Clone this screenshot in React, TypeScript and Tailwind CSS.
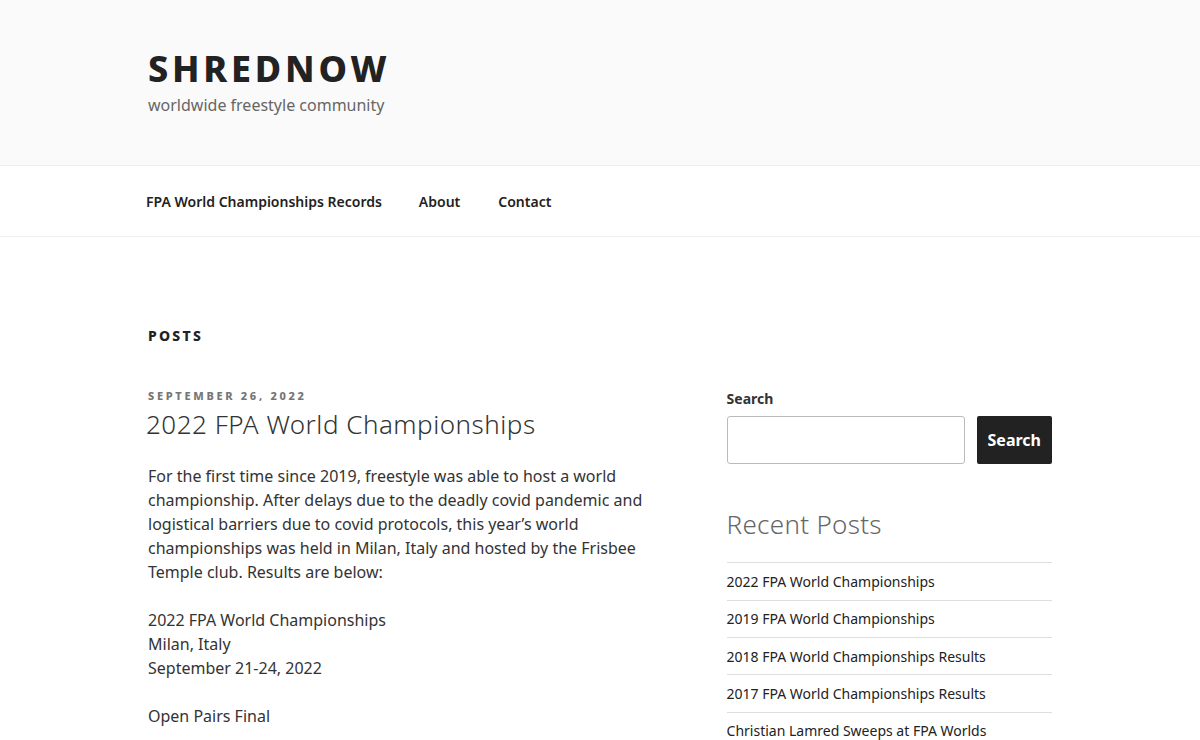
const recent = [
  "2022 FPA World Championships",
  "2019 FPA World Championships",
  "2018 FPA World Championships Results",
  "2017 FPA World Championships Results",
  "Christian Lamred Sweeps at FPA Worlds",
];

export default function App() {
  return (
    <div className="min-h-screen bg-white text-[#333] font-['Noto_Sans',sans-serif]">
      <header className="bg-[#fafafa] border-b border-[#eee] h-[166px]">
        <div className="max-w-[1000px] mx-auto px-12 pt-[46px]">
          <h1 className="text-[36px] leading-[1.25] font-extrabold tracking-[0.105em] uppercase text-[#222]">Shrednow</h1>
          <p className="text-[16px] leading-[1.5] text-[#666] mt-[2px]">worldwide freestyle community</p>
        </div>
      </header>

      <nav className="border-b border-[#eee] h-[71px] bg-white">
        <ul className="max-w-[1000px] mx-auto px-[28px] flex items-center h-full text-[14px] font-semibold text-[#222]">
          <li className="px-[18px]">FPA World Championships Records</li>
          <li className="px-[19px]">About</li>
          <li className="px-[19px]">Contact</li>
        </ul>
      </nav>

      <main className="max-w-[1000px] mx-auto px-12 pt-[88px]">
        <h2 className="text-[14px] font-extrabold tracking-[0.16em] uppercase text-[#222] leading-[1.5]">Posts</h2>

        <div className="flex justify-between mt-[42px]">
          <article className="w-[58%]">
            <div className="text-[11px] font-extrabold tracking-[0.245em] uppercase text-[#767676] leading-[1.5]">September 26, 2022</div>
            <h3 className="text-[26px] font-light leading-[1.4] tracking-[0.5px] text-[#333] -ml-[2px] mt-[1px]">2022 FPA World Championships</h3>
            <div className="text-[16px] leading-[24px] text-[#333] mt-[22px] space-y-6">
              <p>
                For the first time since 2019, freestyle was able to host a world championship. After delays due to the deadly covid
                pandemic and logistical barriers due to covid protocols, this year’s world championships was held in Milan, Italy and
                hosted by the Frisbee Temple club. Results are below:
              </p>
              <p>
                2022 FPA World Championships
                <br />
                Milan, Italy
                <br />
                September 21-24, 2022
              </p>
              <p>Open Pairs Final</p>
            </div>
          </article>

          <aside className="w-[36%]">
            <label className="block text-[14px] font-bold text-[#333] leading-[1.5]">Search</label>
            <div className="flex gap-3 mt-[7px]">
              <input className="flex-1 h-12 border border-[#bbb] rounded-[3px] bg-white" />
              <button className="h-12 px-[11px] bg-[#222] text-white text-[16px] font-bold rounded-[2px]">Search</button>
            </div>
            <h3 className="text-[26px] font-light text-[#666] leading-[1.4] tracking-[0.3px] mt-[42px]">Recent Posts</h3>
            <ul className="mt-[20px] border-t border-[#ddd]">
              {recent.map((r) => (
                <li key={r} className="border-b border-[#ddd] h-[37.3px] flex items-center text-[14px] text-[#222]">
                  {r}
                </li>
              ))}
            </ul>
          </aside>
        </div>
      </main>
    </div>
  );
}
